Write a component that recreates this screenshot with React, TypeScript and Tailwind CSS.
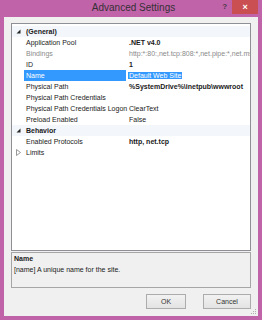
type Row =
  | { kind: 'cat'; label: string }
  | { kind: 'prop'; name: string; value?: string; bold?: boolean; gray?: boolean; selected?: boolean }
  | { kind: 'closed'; name: string };

const rows: Row[] = [
  { kind: 'cat', label: '(General)' },
  { kind: 'prop', name: 'Application Pool', value: '.NET v4.0', bold: true },
  { kind: 'prop', name: 'Bindings', value: 'http:*:80:,net.tcp:808:*,net.pipe:*,net.msmq/localhost', gray: true },
  { kind: 'prop', name: 'ID', value: '1', bold: true },
  { kind: 'prop', name: 'Name', value: 'Default Web Site', selected: true },
  { kind: 'prop', name: 'Physical Path', value: '%SystemDrive%\\inetpub\\wwwroot', bold: true },
  { kind: 'prop', name: 'Physical Path Credentials', value: '' },
  { kind: 'prop', name: 'Physical Path Credentials Logon', value: 'ClearText' },
  { kind: 'prop', name: 'Preload Enabled', value: 'False' },
  { kind: 'cat', label: 'Behavior' },
  { kind: 'prop', name: 'Enabled Protocols', value: 'http, net.tcp', bold: true },
  { kind: 'closed', name: 'Limits' },
];

const Expanded = () => (
  <svg width="5" height="5" viewBox="0 0 5 5">
    <polygon points="4.5,0.5 4.5,4.5 0.5,4.5" fill="#262626" />
  </svg>
);

const Collapsed = () => (
  <svg width="5" height="7" viewBox="0 0 5 7">
    <polygon points="0.5,0.5 4.5,3.5 0.5,6.5" fill="none" stroke="#8c8c8c" strokeWidth="0.9" />
  </svg>
);

const GridRow = ({ row }: { row: Row }) => {
  if (row.kind === 'cat') {
    return (
      <div className="flex h-[11px] bg-[#f3f6fa]">
        <div className="w-[12px] flex items-center justify-center">
          <Expanded />
        </div>
        <div className="pl-[2px] font-bold text-[#1a1a1a]">{row.label}</div>
      </div>
    );
  }
  if (row.kind === 'closed') {
    return (
      <div className="flex h-[11px]">
        <div className="w-[12px] flex items-center justify-center">
          <Collapsed />
        </div>
        <div className="pl-[2px] text-[#1a1a1a]">{row.name}</div>
      </div>
    );
  }
  return (
    <div className="flex h-[11px]">
      <div className="w-[12px] shrink-0" />
      <div
        className={
          row.selected
            ? 'w-[102px] shrink-0 pl-[2px] bg-[#3399ff] text-white whitespace-nowrap'
            : row.gray
              ? 'w-[102px] shrink-0 pl-[2px] text-[#8a8a8a] whitespace-nowrap'
              : 'w-[102px] shrink-0 pl-[2px] text-[#1a1a1a] whitespace-nowrap'
        }
      >
        {row.name}
      </div>
      <div className="w-[2px] shrink-0" />
      <div className="flex-1 min-w-0 whitespace-nowrap overflow-hidden">
        {row.selected ? (
          <span className="bg-[#3399ff] text-white px-[1px]">{row.value}</span>
        ) : (
          <span
            className={
              row.gray
                ? 'px-[1px] text-[#8a8a8a]'
                : row.bold
                  ? 'px-[1px] font-bold text-[#1a1a1a]'
                  : 'px-[1px] text-[#1a1a1a]'
            }
          >
            {row.value}
          </span>
        )}
      </div>
    </div>
  );
};

const App = () => {
  return (
    <div className="w-[262px] h-[320px] bg-[#c163a9] flex flex-col overflow-hidden font-['Liberation_Sans',Arial,sans-serif] text-[7px] leading-[11px]">
      {/* Title bar */}
      <div className="h-[17px] flex shrink-0 pr-[4px]">
        <div className="flex-1" />
        <div className="ml-[9px] pt-[2px] text-[10px] leading-[12px] text-[#363036] whitespace-nowrap">
          Advanced Settings
        </div>
        <div className="flex-1 flex justify-end items-start">
          <span className="mt-[1px] mr-[5px] text-[8px] leading-[11px] font-bold text-[#4a3a48]">?</span>
          <div className="w-[26px] h-[14px] bg-[#c94f52] flex items-center justify-center text-white text-[9px] leading-[9px] font-bold">
            ×
          </div>
        </div>
      </div>

      {/* Client area */}
      <div className="relative flex-1 mx-[4px] mb-[4px] bg-[#f0f0f0] px-[7px] pt-[6px] flex flex-col">
        <div className="h-[228px] border border-[#8e9096] bg-white pt-[2px] overflow-hidden">
          {rows.map((r, i) => (
            <GridRow key={i} row={r} />
          ))}
        </div>

        <div className="mt-[1px] h-[36px] border border-[#a6a6a6] bg-[#f0f0f0] pl-[2px] text-[#1a1a1a]">
          <div className="font-bold">Name</div>
          <div>[name] A unique name for the site.</div>
        </div>

        <div className="mt-[6px] flex justify-end gap-[17px]">
          <button className="w-[40px] h-[15px] border border-[#acacac] bg-gradient-to-b from-[#f2f2f2] to-[#e3e3e3] text-[#333] text-[7px] leading-[13px]">
            OK
          </button>
          <button className="w-[48px] h-[15px] border border-[#acacac] bg-gradient-to-b from-[#f2f2f2] to-[#e3e3e3] text-[#333] text-[7px] leading-[13px]">
            Cancel
          </button>
        </div>

        {/* resize grip */}
        <svg className="absolute right-[1px] bottom-[1px]" width="6" height="6" viewBox="0 0 6 6">
          <rect x="4" y="0" width="1" height="1" fill="#b0b0b0" />
          <rect x="2" y="2" width="1" height="1" fill="#b0b0b0" />
          <rect x="4" y="2" width="1" height="1" fill="#b0b0b0" />
          <rect x="0" y="4" width="1" height="1" fill="#b0b0b0" />
          <rect x="2" y="4" width="1" height="1" fill="#b0b0b0" />
          <rect x="4" y="4" width="1" height="1" fill="#b0b0b0" />
        </svg>
      </div>
    </div>
  );
};

export default App;
